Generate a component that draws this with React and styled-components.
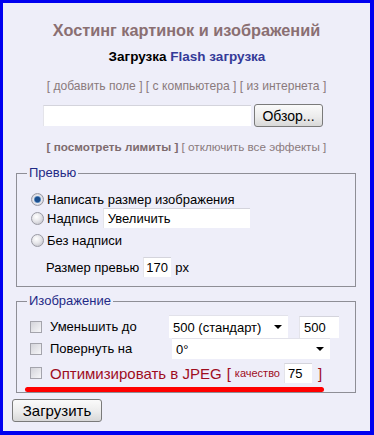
import React from 'react';
import styled, { createGlobalStyle } from 'styled-components';

const GlobalStyle = createGlobalStyle`
  html, body {
    margin: 0;
    padding: 0;
    background: #0000f0;
  }
  body {
    font-family: "Liberation Sans", Arial, sans-serif;
  }
`;

const Frame = styled.div`
  box-sizing: border-box;
  width: 374px;
  height: 435px;
  border-style: solid;
  border-color: #0000f0;
  border-width: 3px 4px 4px 3px;
  background: #eeeef9;
  padding: 16px 0 0;
  font-size: 13px;
  color: #000;
`;

const Title = styled.h1`
  margin: 0;
  font-size: 16.3px;
  line-height: 22px;
  font-weight: bold;
  color: #8a6f72;
  text-align: center;
`;

const Tabs = styled.div`
  margin-top: 8px;
  line-height: 16px;
  font-weight: bold;
  text-align: center;
  font-size: 13.5px;
  padding-left: 1px;
`;

const TabLink = styled.span`
  color: #343a98;
`;

const LinkRow = styled.div`
  margin-top: ${({ $top }) => $top}px;
  line-height: 16px;
  text-align: center;
  color: #8a7a7c;
  font-size: ${({ $fs }) => $fs}px;
`;

const Strong = styled.b`
  color: #7d6b6e;
`;

const FileRow = styled.div`
  display: flex;
  justify-content: center;
  align-items: center;
  gap: 3px;
  margin-top: 10px;
  padding-right: 7px;
`;

const TextBox = styled.input`
  box-sizing: border-box;
  width: ${({ $w }) => $w}px;
  height: ${({ $h }) => $h || 20}px;
  border: none;
  border-top: 1px solid #d4d4dc;
  border-left: 1px solid #e4e4ea;
  background: #fff;
  font-family: inherit;
  font-size: ${({ $fs }) => $fs || 13}px;
  color: #000;
  padding: 0 ${({ $pad }) => ($pad === undefined ? 4 : $pad)}px;
  outline: none;
  margin: 0;
`;

const Button = styled.button`
  box-sizing: border-box;
  width: ${({ $w }) => $w}px;
  height: ${({ $h }) => $h}px;
  border: 1px solid #7a7a7a;
  border-radius: 3px;
  background: linear-gradient(#fafafa, #ececec 55%, #d8d8d8);
  font-family: inherit;
  font-size: ${({ $fs }) => $fs}px;
  color: #000;
  padding: 0;
  margin: 0;
`;

const Fieldset = styled.fieldset`
  position: relative;
  margin: ${({ $top }) => $top}px 14px 0 13px;
  border: 1px solid #8e8e96;
  padding: ${({ $pt }) => $pt}px 10px ${({ $pb }) => $pb}px 14px;
`;

const Legend = styled.legend`
  color: #1f2a86;
  font-size: 13px;
  line-height: 16px;
  padding: 0 2px;
  margin-left: -4px;
`;

const OptRow = styled.label`
  display: flex;
  align-items: center;
  gap: 3px;
  height: ${({ $h }) => $h}px;
  margin-top: ${({ $top }) => $top || 0}px;
  font-size: 13px;
`;

const Radio = styled.input.attrs({ type: 'radio' })`
  appearance: none;
  box-sizing: border-box;
  width: 13px;
  height: 13px;
  margin: 0;
  border-radius: 50%;
  border: 1px solid #9a9aa4;
  background: radial-gradient(circle at 40% 35%, #ffffff 0%, #e6e6ea 45%, #b8b8c0 100%);
  flex: none;
  &:checked {
    background: radial-gradient(circle at 50% 50%, #1b4f8f 0 2.5px, #6f9ac8 3.2px, #e8e8ee 4px, #b8b8c0 100%);
  }
`;

const PreviewSize = styled.div`
  display: flex;
  align-items: center;
  gap: 4px;
  height: 20px;
  margin-top: 9px;
  padding-left: 15px;
`;

const ImageGrid = styled.div`
  display: grid;
  grid-template-columns: 133px auto auto;
  align-items: center;
  column-gap: 5px;
`;

const CheckLabel = styled.label`
  display: flex;
  align-items: center;
  gap: 8px;
  height: ${({ $h }) => $h}px;
  font-size: 13px;
`;

const Check = styled.input.attrs({ type: 'checkbox' })`
  appearance: none;
  box-sizing: border-box;
  width: 12px;
  height: 12px;
  margin: 0 0 0 -1px;
  border: 1px solid #a4a4ac;
  background: linear-gradient(135deg, #d4d4da, #f6f6f8);
  flex: none;
`;

const SelectBox = styled.div`
  position: relative;
  grid-column: ${({ $span }) => ($span ? '2 / span 2' : 'auto')};
  width: ${({ $w }) => $w}px;
  margin-left: ${({ $ml }) => $ml || 0}px;
`;

const Select = styled.select`
  appearance: none;
  box-sizing: border-box;
  width: 100%;
  height: ${({ $h }) => $h}px;
  border: none;
  border-top: 1px solid #e2e2ea;
  background: #fff;
  font-family: inherit;
  font-size: 13px;
  color: #000;
  padding: 0 4px;
  margin: 0;
  outline: none;
`;

const Arrow = styled.svg`
  position: absolute;
  right: 6px;
  top: 50%;
  margin-top: -2px;
  pointer-events: none;
`;

const JpegRow = styled.div`
  grid-column: 1 / span 3;
  display: flex;
  align-items: center;
  height: 20px;
  margin-top: 4px;
  color: #9e0d1e;
`;

const JpegText = styled.span`
  font-size: 15px;
  margin-left: 8px;
`;

const Bracket = styled.span`
  font-size: 15px;
  margin: 0 ${({ $r }) => $r || 0}px 0 ${({ $l }) => $l || 0}px;
`;

const Small = styled.span`
  font-size: 11px;
  margin: 0 4px 0 4px;
`;

const Mark = styled.div`
  position: absolute;
  left: 8px;
  top: 78px;
  width: 299px;
  height: 5px;
  border-radius: 3px;
  background: #ff0000;
`;

const Footer = styled.div`
  margin: 6px 0 0 9px;
`;

const ArrowIcon = () => (
  <Arrow width="8" height="4" viewBox="0 0 8 4">
    <path d="M0 0 H8 L4 4 Z" fill="#000" />
  </Arrow>
);

export default function App() {
  return (
    <Frame>
      <GlobalStyle />
      <Title>Хостинг картинок и изображений</Title>
      <Tabs>
        Загрузка <TabLink>Flash загрузка</TabLink>
      </Tabs>
      <LinkRow $top={13} $fs={12.1}>[ добавить поле ] [ с компьютера ] [ из интернета ]</LinkRow>
      <FileRow>
        <TextBox $w={208} $h={21} />
        <Button $w={69} $h={23} $fs={14}>Обзор...</Button>
      </FileRow>
      <LinkRow $top={12} $fs={11.7}>
        <Strong>[ посмотреть лимиты ]</Strong> [ отключить все эффекты ]
      </LinkRow>

      <Fieldset $top={10} $pt={10} $pb={9}>
        <Legend>Превью</Legend>
        <OptRow $h={16}>
          <Radio name="preview" defaultChecked />
          Написать размер изображения
        </OptRow>
        <OptRow $h={20} $top={1}>
          <Radio name="preview" />
          Надпись
          <TextBox $w={147} defaultValue="Увеличить" style={{ marginLeft: 1 }} />
        </OptRow>
        <OptRow $h={16} $top={4}>
          <Radio name="preview" />
          Без надписи
        </OptRow>
        <PreviewSize>
          Размер превью
          <TextBox $w={28} defaultValue="170" $pad={2} />
          px
        </PreviewSize>
      </Fieldset>

      <Fieldset $top={6} $pt={6} $pb={9}>
        <Legend>Изображение</Legend>
        <ImageGrid>
          <CheckLabel $h={23}>
            <Check />
            Уменьшить до
          </CheckLabel>
          <SelectBox $w={119}>
            <Select $h={23} defaultValue="500">
              <option value="500">500 (стандарт)</option>
            </Select>
            <ArrowIcon />
          </SelectBox>
          <TextBox $w={40} $h={22} defaultValue="500" />
          <CheckLabel $h={21}>
            <Check />
            Повернуть на
          </CheckLabel>
          <SelectBox $span $w={158} $ml={3}>
            <Select $h={21} defaultValue="0">
              <option value="0">0°</option>
            </Select>
            <ArrowIcon />
          </SelectBox>
          <JpegRow>
            <Check />
            <JpegText>Оптимизировать в JPEG</JpegText>
            <Bracket $l={5}>[</Bracket>
            <Small>качество</Small>
            <TextBox $w={28} defaultValue="75" $pad={3} />
            <Bracket $l={6}>]</Bracket>
          </JpegRow>
        </ImageGrid>
        <Mark />
      </Fieldset>

      <Footer>
        <Button $w={90} $h={23} $fs={15}>Загрузить</Button>
      </Footer>
    </Frame>
  );
}
